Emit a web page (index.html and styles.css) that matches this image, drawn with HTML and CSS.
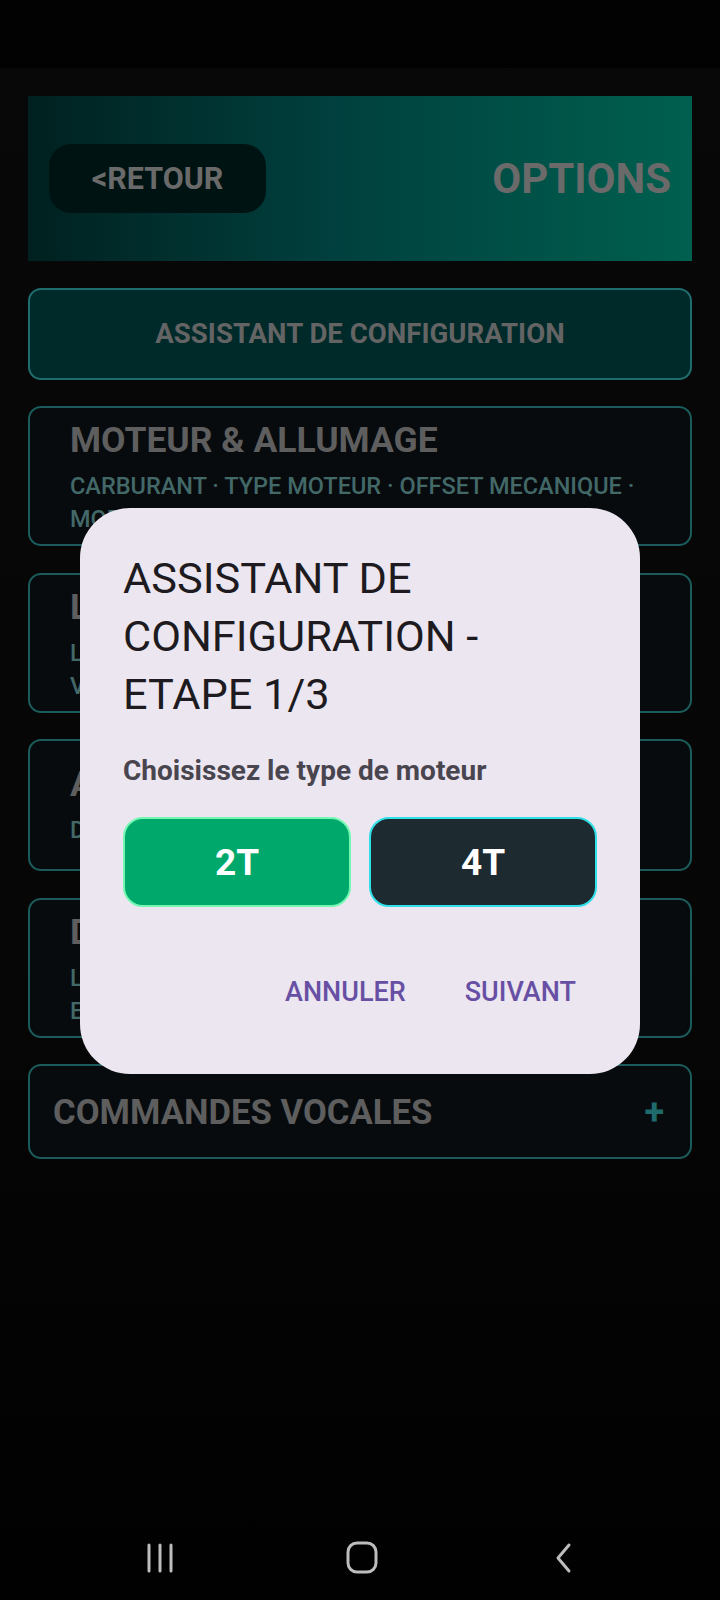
FILE: index.html
```html
<!DOCTYPE html>
<html lang="fr">
<head>
<meta charset="utf-8">
<title>Options</title>
<link rel="stylesheet" href="styles.css">
</head>
<body>
<div class="statusbar"></div>
<main class="content">
  <header class="topbar">
    <div class="back-btn">&lt;RETOUR</div>
    <div class="page-title">OPTIONS</div>
  </header>
  <div class="wizard-btn">ASSISTANT DE CONFIGURATION</div>
  <section class="card card-2l">
    <div class="card-title">MOTEUR &amp; ALLUMAGE</div>
    <div class="card-sub">CARBURANT · TYPE MOTEUR · OFFSET MECANIQUE ·<br>MODE D'ALLUMAGE</div>
  </section>
  <section class="card card-2l">
    <div class="card-title">LIMITEUR &amp; REGIME</div>
    <div class="card-sub">LIMITE RPM · COUPURE · ALERTES<br>VITESSE MAXI</div>
  </section>
  <section class="card card-1l">
    <div class="card-title">AFFICHAGE</div>
    <div class="card-sub">DESIGN · COULEURS · UNITES</div>
  </section>
  <section class="card card-2l">
    <div class="card-title">DONNEES &amp; CAPTEURS</div>
    <div class="card-sub">LOGS · HISTORIQUE · CAPTEURS<br>EXPORT DES DONNEES</div>
  </section>
  <section class="card card-voice">
    <div class="card-title">COMMANDES VOCALES</div>
    <div class="plus">+</div>
  </section>
</main>
<nav class="navbar">
  <div class="nav-cell">
    <svg width="30" height="32" viewBox="0 0 30 32"><g stroke="#bdbdbd" stroke-width="3" stroke-linecap="round"><line x1="4" y1="3" x2="4" y2="29"/><line x1="15" y1="3" x2="15" y2="29"/><line x1="26" y1="3" x2="26" y2="29"/></g></svg>
  </div>
  <div class="nav-cell">
    <svg width="34" height="34" viewBox="0 0 34 34"><rect x="3" y="2" width="28" height="29" rx="9" fill="none" stroke="#bdbdbd" stroke-width="3"/></svg>
  </div>
  <div class="nav-cell">
    <svg width="22" height="32" viewBox="0 0 22 32"><polyline points="16,3 5,16 16,29" fill="none" stroke="#bdbdbd" stroke-width="3" stroke-linecap="round" stroke-linejoin="round"/></svg>
  </div>
</nav>

<div class="dialog">
  <h2 class="dlg-title">ASSISTANT DE CONFIGURATION - ETAPE 1/3</h2>
  <p class="dlg-body">Choisissez le type de moteur</p>
  <div class="choices">
    <div class="choice choice-on">2T</div>
    <div class="choice choice-off">4T</div>
  </div>
  <div class="actions">
    <div class="act">ANNULER</div>
    <div class="act">SUIVANT</div>
  </div>
</div>
</body>
</html>
```
FILE: styles.css
```css
* { box-sizing: border-box; }
html, body { margin: 0; padding: 0; }
body {
  width: 720px;
  height: 1600px;
  background: linear-gradient(180deg, #080808 0%, #060606 60%, #010101 100%);
  font-family: Roboto, "Noto Sans", sans-serif;
  display: flex;
  flex-direction: column;
  position: relative;
  overflow: hidden;
}
.statusbar { height: 68px; background: #020202; flex: none; }
.content {
  padding: 28px 28px 0;
  display: flex;
  flex-direction: column;
  gap: 26.5px;
}
.topbar {
  height: 165px;
  background: linear-gradient(90deg, #002120 0%, #003f3d 45%, #00604f 100%);
  display: flex;
  align-items: center;
  justify-content: space-between;
  padding: 0 21px 0 21px;
}
.back-btn {
  width: 217px;
  height: 69px;
  background: #001313;
  border-radius: 22px;
  display: flex;
  align-items: center;
  justify-content: center;
  color: #6a6a6a;
  font-weight: 700;
  font-size: 30.5px;
}
.page-title {
  color: #6a6a6a;
  font-weight: 700;
  font-size: 42px;
}
.wizard-btn {
  height: 92px;
  border: 2px solid #1f6c6c;
  border-radius: 13px;
  background: #002a2a;
  color: #646464;
  font-weight: 700;
  font-size: 27.6px;
  display: flex;
  align-items: center;
  justify-content: center;
}
.card {
  border: 2px solid #1b5b5b;
  border-radius: 13px;
  background: #070b0e;
  padding: 0 20px 0 40px;
  display: flex;
  flex-direction: column;
  justify-content: center;
}
.card-2l { height: 140px; justify-content: flex-start; padding-top: 12px; }
.card-1l { height: 132px; }
.card-title {
  color: #5e5e5e;
  font-weight: 700;
  font-size: 35.5px;
  line-height: 40px;
  white-space: nowrap;
}
.card-sub {
  margin-top: 10px;
  color: #436868;
  font-weight: 500;
  font-size: 23.5px;
  line-height: 33px;
  white-space: nowrap;
}
.card-voice {
  height: 95px;
  flex-direction: row;
  align-items: center;
  justify-content: space-between;
  padding: 0 26px 0 23px;
}
.card-voice .card-title { font-size: 34.7px; }
.plus {
  color: #1f6b6b;
  font-weight: 700;
  font-size: 36px;
  line-height: 1;
}
.navbar {
  margin-top: auto;
  height: 84px;
  display: flex;
  justify-content: center;
  align-items: center;
  padding-left: 4px;
  flex: none;
}
.nav-cell {
  width: 202px;
  display: flex;
  justify-content: center;
  align-items: center;
}
.dialog {
  position: absolute;
  left: 80px;
  top: 508px;
  width: 560px;
  height: 566px;
  background: #ece6f0;
  border-radius: 50px;
  padding: 42px 43px 46px;
  display: flex;
  flex-direction: column;
}
.dlg-title {
  margin: 0;
  font-weight: 400;
  font-size: 43.3px;
  line-height: 58px;
  color: #1d1b20;
  width: 420px;
}
.dlg-body {
  margin: 29px 0 0;
  font-weight: 700;
  font-size: 28px;
  line-height: 36px;
  color: #49454f;
}
.choices {
  margin-top: 28px;
  display: flex;
  gap: 18px;
}
.choice {
  flex: 1;
  height: 90px;
  border-radius: 20px;
  display: flex;
  align-items: center;
  justify-content: center;
  color: #ffffff;
  font-weight: 700;
  font-size: 37px;
}
.choice-on { background: #00a86b; border: 2px solid #74f7b2; }
.choice-off { background: #1d2b31; border: 2px solid #2fe0e8; }
.actions {
  margin-top: 49px;
  height: 72px;
  display: flex;
  justify-content: flex-end;
  align-items: center;
  gap: 17px;
}
.act {
  padding: 0 21px;
  height: 72px;
  display: flex;
  align-items: center;
  color: #6750a4;
  font-weight: 500;
  font-size: 27px;
}
```
